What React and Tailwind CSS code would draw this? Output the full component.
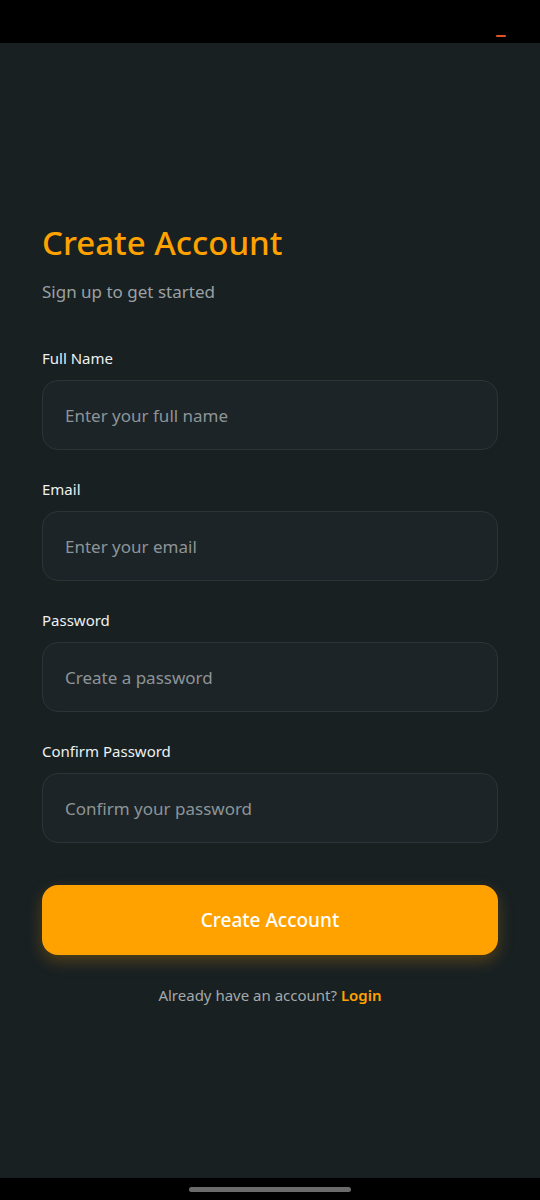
import { useState } from "react";

const FIELDS = [
  { id: "fullName", label: "Full Name", placeholder: "Enter your full name", type: "text" },
  { id: "email", label: "Email", placeholder: "Enter your email", type: "email" },
  { id: "password", label: "Password", placeholder: "Create a password", type: "password" },
  { id: "confirm", label: "Confirm Password", placeholder: "Confirm your password", type: "password" },
];

export default function App() {
  const [values, setValues] = useState({});

  return (
    <div
      className="flex min-h-[1200px] flex-col bg-[#182022]"
      style={{ fontFamily: '"Noto Sans", "Open Sans", sans-serif' }}
    >
      {/* status bar */}
      <div className="flex h-[43px] items-end justify-end bg-black pb-[6px] pr-[34px]">
        <span className="h-[2px] w-[10px] rounded-full bg-[#e0522a]" />
      </div>

      <main className="flex flex-1 flex-col px-[42px] pt-[180px]">
        <h1 className="text-[33px] leading-[40px] font-medium text-[#ffa200]">Create Account</h1>
        <p className="mt-[17px] text-[17px] leading-[24px] text-[#9aa1a4]">Sign up to get started</p>

        <form className="mt-[44px] flex flex-col gap-[29px]" onSubmit={(e) => e.preventDefault()}>
          {FIELDS.map((field) => (
            <div key={field.id} className="flex flex-col">
              <label htmlFor={field.id} className="text-[15px] leading-[20px] text-[#eef0f1]">
                {field.label}
              </label>
              <input
                id={field.id}
                type={field.type}
                placeholder={field.placeholder}
                value={values[field.id] || ""}
                onChange={(e) => setValues({ ...values, [field.id]: e.target.value })}
                className="mt-[12px] h-[70px] rounded-[16px] border border-[#2c3437] bg-[#1c2427] px-[22px] text-[17px] text-white outline-none placeholder:text-[#8d9497]"
              />
            </div>
          ))}

          <button
            type="submit"
            className="mt-[13px] h-[70px] rounded-[16px] bg-[#ffa200] text-[19px] font-medium text-white shadow-[0_6px_16px_rgba(255,162,0,0.25)]"
          >
            Create Account
          </button>
        </form>

        <p className="mt-[29px] text-center text-[15px] leading-[22px] text-[#a4a9ab]">
          Already have an account? <span className="font-semibold text-[#ffa200]">Login</span>
        </p>
      </main>

      {/* nav bar */}
      <div className="flex h-[22px] items-center justify-center bg-black">
        <span className="h-[5px] w-[162px] rounded-full bg-[#6b6b6b]" />
      </div>
    </div>
  );
}
